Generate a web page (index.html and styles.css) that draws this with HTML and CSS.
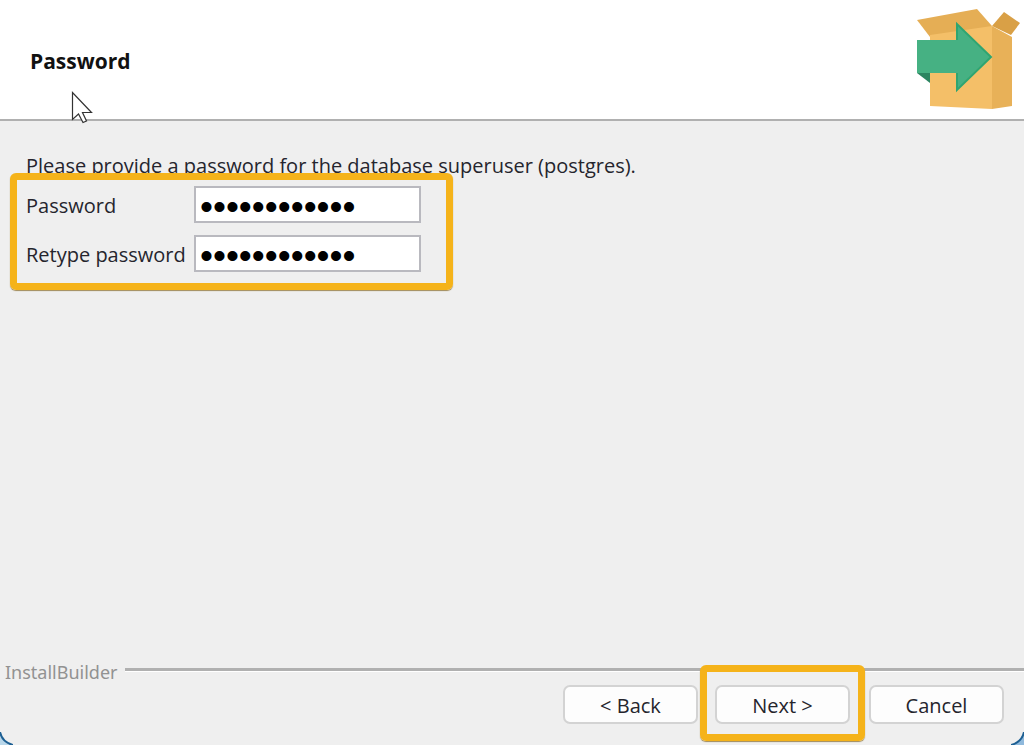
FILE: index.html
```html
<!DOCTYPE html>
<html lang="en">
<head>
  <meta charset="UTF-8" />
  <meta name="viewport" content="width=device-width, initial-scale=1.0" />
  <title>Setup</title>
  <link rel="stylesheet" href="styles.css">
</head>
<body>
  <form class="wizard">
    <header class="header">
      <h1>Password</h1>
      <svg class="logo" viewBox="0 0 108 106" aria-hidden="true">
        <path d="M2 12 62 1 77 18 73 29 15 29Z" fill="#e5ae55"/>
        <path d="M77 18 89 4 105 15 96 27Z" fill="#d9a046"/>
        <path d="M15 27 77 18V101L15 98Z" fill="#f4bf68"/>
        <path d="M77 18 97 29V98L77 101Z" fill="#e8b158"/>
        <path d="M2 65 15 65V75Z" fill="#2c8561"/>
        <path d="M2 32H42V16L76 49 42 82V65H2Z" fill="#46b183"/>
        <path d="M42 32V16L76 49 42 82V65" fill="none" stroke="#2fa571" stroke-width="2"/>
      </svg>
      <svg class="cursor" viewBox="0 0 22 33" aria-hidden="true">
        <path d="M1.500 1.500V28.500L7.500 23 12 31.500 15.500 30 11.500 21.500H20.500Z" fill="#fff" stroke="#333" stroke-width="1.200"/>
      </svg>
    </header>

    <main class="content">
      <p class="intro">Please provide a password for the database superuser (postgres).</p>
      <div class="fields">
        <label for="password">Password</label>
        <input type="password" id="password" value="postgres1234" />
        <label for="retype">Retype password</label>
        <input type="password" id="retype" value="postgres1234" />
      </div>
    </main>

    <footer class="footer">
      <div class="brand">InstallBuilder</div>
      <div class="buttons">
        <button type="button">&lt; Back</button>
        <div class="next"><button type="button">Next &gt;</button></div>
        <button type="button">Cancel</button>
      </div>
    </footer>

    <svg class="corner left" viewBox="0 0 13 13" aria-hidden="true">
      <path d="M0 0Q2 10 13 13H0Z" fill="#b9d7ea"/>
      <path d="M0 0Q2 10 13 13" fill="none" stroke="#1d5f93" stroke-width="2"/>
    </svg>
    <svg class="corner right" viewBox="0 0 13 13" aria-hidden="true">
      <path d="M13 0Q11 10 0 13H13Z" fill="#8fb9dc"/>
      <path d="M13 0Q11 10 0 13" fill="none" stroke="#1d5f93" stroke-width="2"/>
    </svg>
  </form>
</body>
</html>
```
FILE: styles.css
```css
* {
  box-sizing: border-box;
}
body {
  margin: 0;
  background: #efefef;
  color: #25252d;
  font-family: "Open Sans", sans-serif;
  font-size: 20px;
  line-height: 26px;
}
.wizard {
  position: relative;
  display: flex;
  flex-direction: column;
  min-height: 100vh;
  overflow: hidden;
}
.header {
  position: relative;
  display: flex;
  justify-content: space-between;
  align-items: center;
  height: 121px;
  padding: 3px 1px 0 30px;
  background: #fff;
  border-bottom: 2px solid #b0b0b0;
}
h1 {
  margin: 0;
  color: #111;
  font-size: 21px;
  font-weight: bold;
}
.logo {
  width: 108px;
  height: 106px;
}
.cursor {
  position: absolute;
  left: 71px;
  top: 91px;
  width: 22px;
  height: 33px;
}
.content {
  flex: 1;
  padding: 32px 10px 0;
}
.intro {
  margin: 0 16px;
}
/* the highlight frame cuts into the line above */
.fields {
  display: inline-grid;
  grid-template-columns: 158px 227px;
  gap: 12px 10px;
  align-items: center;
  position: relative;
  margin-top: -6px;
  padding: 6px 25px 11px 9px;
  border: 7px solid #f5b31a;
  border-radius: 6px;
  box-shadow: 0 1px 1px #a08a58;
}
label {
  padding-top: 2px;
  white-space: nowrap;
}
input {
  width: 100%;
  height: 37px;
  padding: 4px 4px 0;
  border: 2px solid #b9b9bf;
  background: #fff;
  color: #000;
  font-family: "Liberation Sans", sans-serif;
  font-size: 37px;
}
.footer {
  padding-bottom: 4px;
}
.brand {
  display: flex;
  align-items: center;
  gap: 7px;
  padding-left: 5px;
  margin-bottom: -20px;
  color: #929292;
  font-family: "Noto Sans", sans-serif;
  font-size: 18px;
}
.brand::after {
  content: "";
  flex: 1;
  height: 3px;
  margin-bottom: 4px;
  background: #b0b0b0;
  border-bottom: 1px solid #fff;
}
.buttons {
  display: flex;
  justify-content: flex-end;
  align-items: center;
  gap: 2px;
  padding-right: 20px;
}
button {
  width: 135px;
  height: 39px;
  padding: 1px 0 0;
  border: 2px solid #d3d3d3;
  border-radius: 7px;
  background: #fdfdfd;
  color: #25252d;
  font-family: inherit;
  font-size: 20px;
}
.buttons > button {
  margin-top: 3px;
}
.next {
  position: relative;
  padding: 13px 8px 10px;
  border: 7px solid #f5b31a;
  border-radius: 6px;
  box-shadow: 0 1px 1px #a08a58;
}
.next button {
  display: block;
}
.next + button {
  margin-left: 2px;
}
.corner {
  position: absolute;
  bottom: 0;
  width: 13px;
  height: 13px;
}
.left {
  left: 0;
}
.right {
  right: 0;
}
```
